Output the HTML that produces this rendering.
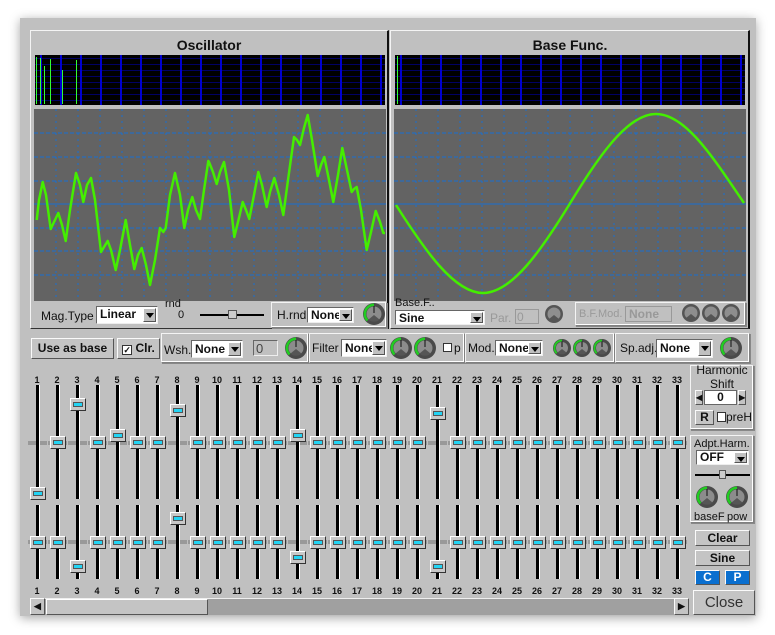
<!DOCTYPE html>
<html><head><meta charset="utf-8">
<style>
*{box-sizing:border-box;margin:0;padding:0}
body{width:775px;height:635px;background:#fff;position:relative;overflow:hidden;font-family:"Liberation Sans",sans-serif;font-size:12px;color:#111}
.a{position:absolute}
.win{left:20px;top:18px;width:736px;height:598px;background:#c0c0c0;box-shadow:0 2px 10px rgba(0,0,0,.35)}
.up{border:1px solid;border-color:#f4f4f4 #333 #333 #f4f4f4}
.grp{border:1px solid;border-color:#f4f4f4 #808080 #808080 #f4f4f4;box-shadow:inset -1px -1px 0 #fff,1px 1px 0 #888}
.btn{background:#c4c4c4;border:1px solid;border-color:#fafafa #555 #555 #fafafa;font-weight:bold;text-align:center;font-size:12px}
.sel{background:#fff;border:1px solid;border-color:#666 #eee #eee #666;font-weight:bold;font-size:12px;padding-left:3px;line-height:14px}
.sel i{position:absolute;right:1px;top:1px;width:13px;bottom:1px;background:#c0c0c0;border:1px solid;border-color:#fff #555 #555 #fff}
.sel i:after{content:"";position:absolute;left:2px;top:4px;border-left:4px solid transparent;border-right:4px solid transparent;border-top:5px solid #000}
.dis{color:#999}
.t{font-weight:bold;font-size:14px;text-align:center}
.num span{display:inline-block;width:20px;text-align:center;font-weight:bold;font-size:9px}
.spec{background-color:#000;background-image:repeating-linear-gradient(90deg,transparent 0 5px,#0000d0 5px 7px,transparent 7px 20px),repeating-linear-gradient(0deg,transparent 0 4px,rgba(0,0,200,.5) 4px 5px,transparent 5px 6px)}
</style></head><body>
<div class="a win"></div>

<div class="a up" style="left:30px;top:30px;width:359px;height:299px;border-right:2px solid #111"></div>
<div class="a t" style="left:30px;top:37px;width:358px">Oscillator</div>
<div class="a spec" style="left:35px;top:55px;width:350px;height:50px"></div>
<div class="a" style="left:36px;top:57px;width:1px;height:47px;background:#3f3"></div>
<div class="a" style="left:40px;top:58px;width:1px;height:46px;background:#3f3"></div>
<div class="a" style="left:44px;top:66px;width:1px;height:38px;background:#3f3"></div>
<div class="a" style="left:50px;top:59px;width:1px;height:45px;background:#3f3"></div>
<div class="a" style="left:62px;top:70px;width:1px;height:34px;background:#3f3"></div>
<div class="a" style="left:76px;top:60px;width:1px;height:44px;background:#3f3"></div>

<svg class="a" style="left:34px;top:109px" width="352" height="192">
<rect width="352" height="192" fill="#636363"/>
<g stroke="#1a6fd0" stroke-width="1" stroke-dasharray="2 4">
<line x1="22" y1="0" x2="22" y2="192"/><line x1="44" y1="0" x2="44" y2="192"/><line x1="66" y1="0" x2="66" y2="192"/><line x1="88" y1="0" x2="88" y2="192"/><line x1="110" y1="0" x2="110" y2="192"/><line x1="132" y1="0" x2="132" y2="192"/><line x1="154" y1="0" x2="154" y2="192"/><line x1="176" y1="0" x2="176" y2="192"/><line x1="198" y1="0" x2="198" y2="192"/><line x1="220" y1="0" x2="220" y2="192"/><line x1="242" y1="0" x2="242" y2="192"/><line x1="264" y1="0" x2="264" y2="192"/><line x1="286" y1="0" x2="286" y2="192"/><line x1="308" y1="0" x2="308" y2="192"/><line x1="330" y1="0" x2="330" y2="192"/>
</g>
<g stroke="#1a6fd0" stroke-width="1" stroke-dasharray="4 2">
<line x1="0" y1="24" x2="352" y2="24"/><line x1="0" y1="48" x2="352" y2="48"/><line x1="0" y1="72" x2="352" y2="72"/><line x1="0" y1="119" x2="352" y2="119"/><line x1="0" y1="142" x2="352" y2="142"/><line x1="0" y1="166" x2="352" y2="166"/>
</g>
<line x1="0" y1="95" x2="352" y2="95" stroke="#1a6fd0"/>
<polyline fill="none" stroke="#44ee00" stroke-width="2.5" stroke-linejoin="round" transform="translate(-34,-109)" points="36.7,220 39,200 42.7,182 46,195 50.7,229 54,222 58.3,213 62,225 65.7,241 70,210 76,173 80,185 83.3,202 87,185 91,178 95,200 101,252 104,247 107.7,241 111,250 115.7,270 120,250 125.7,220 130,245 134.3,269 138,255 141.7,248 146,265 150,285 155,260 160,228 163.3,232 165.7,228 170,195 175,173 180,195 184.3,228 188,210 192.3,197 196,210 200,219 204,190 208.3,161 209,162 213,172 216.7,184 220,172 224,162 229,190 234.3,237 238,222 242.7,202 246,210 249.3,219 254,195 258.3,172 262,185 266.7,207 270,192 274.3,178 279,195 283.3,215 288,180 294,137 297,140 300,145 304,128 307.7,115 312,140 317.7,176 321,165 324.3,157 329,180 333.3,202 338,175 342.3,148 347,170 351.7,192 354,189 356.7,187 361,210 366.7,250 371,232 375.7,211 380,222 383.3,233 385,233"/>
</svg>

<div class="a" style="left:41px;top:309px">Mag.Type</div>
<div class="a sel" style="left:96px;top:306px;width:62px;height:18px">Linear<i></i></div>
<div class="a" style="left:165px;top:298px;font-size:11px">rnd</div>
<div class="a" style="left:178px;top:309px;font-size:11px">0</div>
<div class="a" style="left:200px;top:314px;width:64px;height:2px;background:#000"></div>
<div class="a" style="left:228px;top:310px;width:9px;height:9px;background:#ccc;border:1px solid #555"></div>
<div class="a grp" style="left:271px;top:302px;width:116px;height:26px"></div>
<div class="a" style="left:277px;top:308px">H.rnd</div>
<div class="a sel" style="left:307px;top:307px;width:47px;height:16px">None<i></i></div>

<div class="a up" style="left:390px;top:30px;width:360px;height:299px;border-right:2px solid #111"></div>
<div class="a t" style="left:390px;top:37px;width:360px">Base Func.</div>
<div class="a spec" style="left:395px;top:55px;width:350px;height:50px"></div>
<div class="a" style="left:397px;top:56px;width:1px;height:48px;background:#3f3"></div>
<svg class="a" style="left:394px;top:109px" width="352" height="192">
<rect width="352" height="192" fill="#636363"/>
<g stroke="#1a6fd0" stroke-width="1" stroke-dasharray="2 4">
<line x1="22" y1="0" x2="22" y2="192"/><line x1="44" y1="0" x2="44" y2="192"/><line x1="66" y1="0" x2="66" y2="192"/><line x1="88" y1="0" x2="88" y2="192"/><line x1="110" y1="0" x2="110" y2="192"/><line x1="132" y1="0" x2="132" y2="192"/><line x1="154" y1="0" x2="154" y2="192"/><line x1="176" y1="0" x2="176" y2="192"/><line x1="198" y1="0" x2="198" y2="192"/><line x1="220" y1="0" x2="220" y2="192"/><line x1="242" y1="0" x2="242" y2="192"/><line x1="264" y1="0" x2="264" y2="192"/><line x1="286" y1="0" x2="286" y2="192"/><line x1="308" y1="0" x2="308" y2="192"/><line x1="330" y1="0" x2="330" y2="192"/>
</g>
<g stroke="#1a6fd0" stroke-width="1" stroke-dasharray="4 2">
<line x1="0" y1="24" x2="352" y2="24"/><line x1="0" y1="48" x2="352" y2="48"/><line x1="0" y1="72" x2="352" y2="72"/><line x1="0" y1="119" x2="352" y2="119"/><line x1="0" y1="142" x2="352" y2="142"/><line x1="0" y1="166" x2="352" y2="166"/>
</g>
<line x1="0" y1="95" x2="352" y2="95" stroke="#1a6fd0"/>
<path fill="none" stroke="#44ee00" stroke-width="2.5" d="M2,96 C30,140 60,184 89,184 C118,184 148,140 175,96 C202,52 232,5 262,5 C292,5 320,50 350,94"/>
</svg>
<div class="a" style="left:395px;top:297px;font-size:11px">Base.F..</div>
<div class="a sel" style="left:395px;top:310px;width:90px;height:15px">Sine<i></i></div>
<div class="a dis" style="left:490px;top:311px">Par.</div>
<div class="a" style="left:515px;top:309px;width:24px;height:15px;border:1px solid #999;color:#999;padding-left:1px">0</div>
<div class="a grp" style="left:575px;top:302px;width:171px;height:24px"></div>
<div class="a dis" style="left:579px;top:308px;font-size:11px">B.F.Mod.</div>
<div class="a" style="left:625px;top:306px;width:47px;height:16px;border:1px solid #999;color:#999;font-weight:bold;padding-left:3px">None</div>

<div class="a btn" style="left:31px;top:338px;width:83px;height:21px;line-height:19px">Use as base</div>
<div class="a btn" style="left:117px;top:338px;width:43px;height:21px;line-height:19px"><span style="display:inline-block;width:10px;height:10px;border:1px solid #333;background:#fff;font-size:9px;line-height:8px;vertical-align:-1px">✓</span> Clr.</div>
<div class="a grp" style="left:161px;top:333px;width:148px;height:30px"></div>
<div class="a" style="left:164px;top:343px">Wsh.</div>
<div class="a sel" style="left:191px;top:340px;width:52px;height:18px;line-height:16px">None<i></i></div>
<div class="a" style="left:253px;top:340px;width:25px;height:16px;border:1px solid;border-color:#666 #eee #eee #666;padding-left:2px;font-size:13px;color:#444">0</div>
<div class="a grp" style="left:309px;top:333px;width:156px;height:30px"></div>
<div class="a" style="left:312px;top:341px">Filter</div>
<div class="a sel" style="left:341px;top:339px;width:46px;height:18px;line-height:16px">None<i></i></div>
<div class="a" style="left:443px;top:343px;width:9px;height:9px;border:1px solid #333;background:#fff"></div>
<div class="a" style="left:454px;top:341px">p</div>
<div class="a grp" style="left:465px;top:333px;width:150px;height:30px"></div>
<div class="a" style="left:468px;top:341px">Mod.</div>
<div class="a sel" style="left:495px;top:340px;width:48px;height:16px;line-height:14px">None<i></i></div>
<div class="a grp" style="left:615px;top:333px;width:135px;height:30px"></div>
<div class="a" style="left:620px;top:341px">Sp.adj.</div>
<div class="a sel" style="left:656px;top:339px;width:57px;height:19px;line-height:17px">None<i></i></div>

<svg class="a" style="left:0;top:0" width="775" height="635">
<defs>
<g id="k"><circle r="11" fill="#4a4a4a"/><circle r="7.5" fill="#8c8c8c"/><path d="M-5.5,5.5 A7.8,7.8 0 0 0 5.5,5.5 L0,1Z" fill="#555"/><path d="M0,-9.2 A9.2,9.2 0 0 0 -6.5,6.5" fill="none" stroke="#22cc22" stroke-width="2.5"/><line x1="0" y1="-1" x2="0" y2="-8" stroke="#111"/></g>
<g id="ks"><circle r="9" fill="#4a4a4a"/><circle r="6" fill="#8c8c8c"/><path d="M-4.5,4.5 A6.4,6.4 0 0 0 4.5,4.5 L0,1Z" fill="#555"/><path d="M0,-7.5 A7.5,7.5 0 0 0 -5.3,5.3" fill="none" stroke="#22cc22" stroke-width="2"/><line x1="0" y1="-1" x2="0" y2="-6.5" stroke="#111"/></g>
<g id="kg"><circle r="9" fill="#555"/><circle r="6.5" fill="#8e8e8e"/><path d="M-5,5 A7,7 0 0 0 5,5 L0,1Z" fill="#555"/></g>
</defs>
<use href="#k" x="374" y="314"/><use href="#kg" x="554" y="314"/><use href="#kg" x="691" y="313"/><use href="#kg" x="711" y="313"/><use href="#kg" x="731" y="313"/>
<use href="#k" x="296" y="348"/><use href="#k" x="401" y="348"/><use href="#k" x="425" y="348"/>
<use href="#ks" x="562" y="348"/><use href="#ks" x="582" y="348"/><use href="#ks" x="602" y="348"/><use href="#k" x="731" y="348"/>
<use href="#k" x="707" y="497"/><use href="#k" x="737" y="497"/>
</svg>

<div class="a num" style="left:27px;top:372px"><span>1</span><span>2</span><span>3</span><span>4</span><span>5</span><span>6</span><span>7</span><span>8</span><span>9</span><span>10</span><span>11</span><span>12</span><span>13</span><span>14</span><span>15</span><span>16</span><span>17</span><span>18</span><span>19</span><span>20</span><span>21</span><span>22</span><span>23</span><span>24</span><span>25</span><span>26</span><span>27</span><span>28</span><span>29</span><span>30</span><span>31</span><span>32</span><span>33</span></div>
<div class="a num" style="left:27px;top:583px"><span>1</span><span>2</span><span>3</span><span>4</span><span>5</span><span>6</span><span>7</span><span>8</span><span>9</span><span>10</span><span>11</span><span>12</span><span>13</span><span>14</span><span>15</span><span>16</span><span>17</span><span>18</span><span>19</span><span>20</span><span>21</span><span>22</span><span>23</span><span>24</span><span>25</span><span>26</span><span>27</span><span>28</span><span>29</span><span>30</span><span>31</span><span>32</span><span>33</span></div>
<div id="sl"></div>
<script>
var top1={1:493,3:404,5:435,8:410,14:435,21:413},bot={1:542,3:566,8:518,14:557,21:566},h='';
for(var i=1;i<=33;i++){var x=37+20*(i-1);
h+='<div class="a" style="left:'+(x-9)+'px;top:441px;width:19px;height:4px;background:#999"></div>';
h+='<div class="a" style="left:'+(x-9)+'px;top:540px;width:19px;height:4px;background:#999"></div>';
h+='<div class="a" style="left:'+(x-1)+'px;top:385px;width:4px;height:114px;background:#000;border-right:1px solid #fff"></div>';
h+='<div class="a" style="left:'+(x-1)+'px;top:505px;width:4px;height:74px;background:#000;border-right:1px solid #fff"></div>';
[top1[i]||442,bot[i]||542].forEach(function(y){h+='<div class="a" style="left:'+(x-7)+'px;top:'+(y-6)+'px;width:16px;height:13px;background:#c8c8c8;border:1px solid;border-color:#fff #333 #333 #fff"><div style="margin:3px 2px 0 2px;height:5px;background:#22d4f4;border:1px solid #555"></div></div>'});}
document.getElementById('sl').innerHTML=h;
</script>

<div class="a" style="left:30px;top:598px;width:659px;height:17px;background:#a0a0a0;border-top:1px solid #eee"></div>
<div class="a btn" style="left:30px;top:598px;width:15px;height:17px;font-size:9px;line-height:15px">◀</div>
<div class="a" style="left:46px;top:599px;width:162px;height:16px;background:#c4c4c4;border:1px solid;border-color:#fff #555 #555 #fff"></div>
<div class="a btn" style="left:674px;top:598px;width:15px;height:17px;font-size:9px;line-height:15px">▶</div>

<div class="a grp" style="left:690px;top:365px;width:64px;height:65px"></div>
<div class="a" style="left:690px;top:363px;width:64px;text-align:center;line-height:14px">Harmonic<br>Shift</div>
<div class="a btn" style="left:695px;top:390px;width:8px;height:15px;font-size:8px;line-height:13px">◀</div>
<div class="a" style="left:704px;top:390px;width:33px;height:15px;background:#fff;border:1px solid #666;text-align:center;font-weight:bold;line-height:13px">0</div>
<div class="a btn" style="left:738px;top:390px;width:8px;height:15px;font-size:8px;line-height:13px">▶</div>
<div class="a btn" style="left:695px;top:410px;width:19px;height:15px;line-height:13px">R</div>
<div class="a" style="left:717px;top:412px;width:9px;height:10px;border:1px solid #333;background:#fff"></div>
<div class="a" style="left:726px;top:410px">preH</div>
<div class="a grp" style="left:690px;top:435px;width:64px;height:88px"></div>
<div class="a" style="left:694px;top:438px;font-size:11px">Adpt.Harm.</div>
<div class="a sel" style="left:696px;top:450px;width:53px;height:15px;line-height:13px">OFF<i></i></div>
<div class="a" style="left:695px;top:474px;width:55px;height:2px;background:#000"></div>
<div class="a" style="left:719px;top:470px;width:7px;height:9px;background:#ccc;border:1px solid #555"></div>
<div class="a" style="left:694px;top:511px;font-size:11px">baseF</div>
<div class="a" style="left:727px;top:511px;font-size:11px">pow</div>
<div class="a btn" style="left:695px;top:530px;width:55px;height:16px;line-height:14px">Clear</div>
<div class="a btn" style="left:695px;top:550px;width:55px;height:16px;line-height:14px">Sine</div>
<div class="a btn" style="left:695px;top:570px;width:25px;height:15px;line-height:13px;background:#0a6fcf;color:#fff">C</div>
<div class="a btn" style="left:725px;top:570px;width:25px;height:15px;line-height:13px;background:#0a6fcf;color:#fff">P</div>
<div class="a btn" style="left:693px;top:590px;width:62px;height:25px;line-height:23px;font-weight:normal;font-size:15px;color:#333">Close</div>
</body></html>
